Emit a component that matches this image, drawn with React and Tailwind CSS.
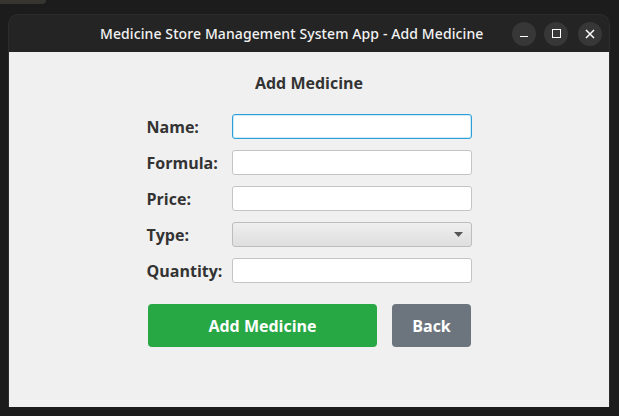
import React from "react";

export default function App() {
    const rows = ["Name:", "Formula:", "Price:", "Type:", "Quantity:"];

    return (
        <div className="relative w-[619px] h-[416px] overflow-hidden bg-[#1c1c1c]" style={{ fontFamily: "'Open Sans', 'Noto Sans', sans-serif" }}>
            {/* corner of the window behind */}
            <div className="absolute left-0 top-0 w-[46px] h-[4px] bg-[#36352f] rounded-br-[6px]" />

            <div className="ml-[8px] mt-[14px] w-[602px] h-[393px] flex flex-col rounded-t-[10px] border border-[#2c2c2c] border-b-0 bg-[#242424] overflow-hidden">
                {/* TITLE BAR */}
                <div className="h-[37px] flex items-center shrink-0">
                    <div className="flex-1 pl-[91px] text-[14px] font-medium text-[#f2f2f2] tracking-[0.1px] whitespace-nowrap" style={{ fontFamily: "'Noto Sans', sans-serif" }}>
                        Medicine Store Management System App - Add Medicine
                    </div>
                    <div className="flex items-center pr-[7px]">
                        <div className="w-[24px] h-[24px] rounded-full bg-[#373737] flex items-center justify-center">
                            <div className="w-[8px] h-[1.5px] bg-white mt-[6px]" />
                        </div>
                        <div className="ml-[8px] w-[24px] h-[24px] rounded-full bg-[#373737] flex items-center justify-center">
                            <div className="w-[9px] h-[9px] border-[1.5px] border-white" />
                        </div>
                        <div className="ml-[10px] w-[24px] h-[24px] rounded-full bg-[#373737] flex items-center justify-center">
                            <svg width="10" height="10" viewBox="0 0 10 10">
                                <path d="M1 1 L9 9 M9 1 L1 9" stroke="white" strokeWidth="1.5" />
                            </svg>
                        </div>
                    </div>
                </div>

                {/* CONTENT */}
                <div className="flex-1 bg-[#f0f0f0] flex flex-col items-center pt-[20px]">
                    <h1 className="text-[16px] leading-[22px] font-bold text-[#333333]">Add Medicine</h1>

                    <div className="mt-[20px] flex flex-col gap-[11px]">
                        {rows.map((label, idx) => (
                            <div key={label} className="flex items-center">
                                <span className="w-[85px] text-[16px] font-bold text-[#333333]">{label}</span>
                                {label === "Type:" ? (
                                    <div className="w-[240px] h-[25px] rounded-[3px] border border-[#bdbdbd] bg-gradient-to-b from-[#efefef] to-[#dedede] flex items-center justify-end pr-[8px]">
                                        <svg width="9" height="5" viewBox="0 0 9 5">
                                            <path d="M0 0 L9 0 L4.5 5 Z" fill="#555555" />
                                        </svg>
                                    </div>
                                ) : (
                                    <div
                                        className={
                                            idx === 0
                                                ? "w-[240px] h-[25px] rounded-[3px] bg-white border border-[#2a9fd8] shadow-[inset_0_0_0_1px_#cfe9f7]"
                                                : "w-[240px] h-[25px] rounded-[3px] bg-white border border-[#c4c4c4]"
                                        }
                                    />
                                )}
                            </div>
                        ))}
                    </div>

                    <div className="mt-[21px] flex gap-[15px] pl-[1px]">
                        <button className="w-[229px] h-[43px] rounded-[4px] bg-[#28a745] text-white text-[16px] font-bold">
                            Add Medicine
                        </button>
                        <button className="w-[79px] h-[43px] rounded-[4px] bg-[#6c757d] text-white text-[16px] font-bold">
                            Back
                        </button>
                    </div>
                </div>
            </div>
        </div>
    );
}
